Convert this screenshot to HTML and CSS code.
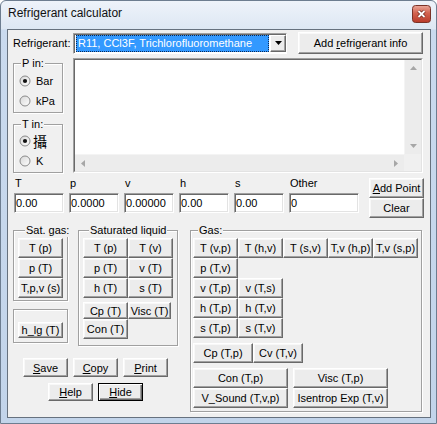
FILE: index.html
```html
<!DOCTYPE html>
<html>
<head>
<meta charset="utf-8">
<title>Refrigerant calculator</title>
<link rel="stylesheet" href="styles.css">
</head>
<body>
<div class="window">
  <div class="titlebar">
    <span class="title">Refrigerant calculator</span>
    <span class="close">
      <svg width="19" height="18" viewBox="0 0 19 18">
        <defs>
          <linearGradient id="cg" x1="0" y1="0" x2="0" y2="1">
            <stop offset="0" stop-color="#eaa89b"/>
            <stop offset="0.45" stop-color="#d3634f"/>
            <stop offset="1" stop-color="#b83a2a"/>
          </linearGradient>
        </defs>
        <rect x="0.5" y="0.5" width="18" height="17" rx="3" fill="url(#cg)" stroke="#7a3328"/>
        <path d="M6.5 6 L12.5 12 M12.5 6 L6.5 12" stroke="#6b2219" stroke-width="3.2"/>
        <path d="M6.5 6 L12.5 12 M12.5 6 L6.5 12" stroke="#fff" stroke-width="1.8"/>
      </svg>
    </span>
  </div>
  <div class="client">
    <div class="row1">
      <span class="reflabel">Refrigerant:</span>
      <div class="combo">
        <span class="combo-sel">R11, CCl3F, Trichlorofluoromethane</span>
        <span class="combo-btn"><svg width="7" height="4" viewBox="0 0 7 4"><path d="M0 0H7L3.5 4Z" fill="#000"/></svg></span>
      </div>
      <button class="btn btn-info">Add <u>r</u>efrigerant info</button>
    </div>

    <div class="row2">
      <div class="units">
        <div class="group pgroup">
          <div class="legend">P in:</div>
          <div class="radios">
            <div class="radio-row">
              <svg class="radio" width="12" height="12" viewBox="0 0 12 12"><defs><linearGradient id="rg" x1="0" y1="0" x2="1" y2="1"><stop offset="0" stop-color="#d6d6d6"/><stop offset="1" stop-color="#ffffff"/></linearGradient></defs><circle cx="6" cy="6" r="5" fill="url(#rg)" stroke="#8a8a8a"/><circle cx="6" cy="6" r="2.1" fill="#111"/></svg>
              <span class="rlabel">Bar</span>
            </div>
            <div class="radio-row">
              <svg class="radio" width="12" height="12" viewBox="0 0 12 12"><circle cx="6" cy="6" r="5" fill="url(#rg)" stroke="#8a8a8a"/></svg>
              <span class="rlabel">kPa</span>
            </div>
          </div>
        </div>
        <div class="group tgroup">
          <div class="legend">T in:</div>
          <div class="radios">
            <div class="radio-row">
              <svg class="radio" width="12" height="12" viewBox="0 0 12 12"><circle cx="6" cy="6" r="5" fill="url(#rg)" stroke="#8a8a8a"/><circle cx="6" cy="6" r="2.1" fill="#111"/></svg>
              <span class="rlabel cjk">攝</span>
            </div>
            <div class="radio-row">
              <svg class="radio" width="12" height="12" viewBox="0 0 12 12"><circle cx="6" cy="6" r="5" fill="url(#rg)" stroke="#8a8a8a"/></svg>
              <span class="rlabel">K</span>
            </div>
          </div>
        </div>
      </div>

      <div class="listbox">
        <div class="lb-inner">
          <div class="lb-area"></div>
          <div class="vscroll">
            <span class="arr"><svg width="7" height="4" viewBox="0 0 7 4"><path d="M3.5 0L7 4H0Z" fill="#a6a6a6"/></svg></span>
            <span class="arr"><svg width="7" height="4" viewBox="0 0 7 4"><path d="M0 0H7L3.5 4Z" fill="#a6a6a6"/></svg></span>
          </div>
          <div class="hscroll">
            <span class="arr"><svg width="4" height="7" viewBox="0 0 4 7"><path d="M0 3.5L4 0V7Z" fill="#a6a6a6"/></svg></span>
            <span class="arr"><svg width="4" height="7" viewBox="0 0 4 7"><path d="M4 3.5L0 0V7Z" fill="#a6a6a6"/></svg></span>
          </div>
          <div class="corner"></div>
        </div>
      </div>
    </div>

    <div class="row3">
      <div class="fields">
        <div class="field"><span class="flabel">T</span><input class="tbox" type="text" value="0.00"></div>
        <div class="field"><span class="flabel">p</span><input class="tbox" type="text" value="0.0000"></div>
        <div class="field"><span class="flabel">v</span><input class="tbox" type="text" value="0.00000"></div>
        <div class="field"><span class="flabel">h</span><input class="tbox" type="text" value="0.00"></div>
        <div class="field"><span class="flabel">s</span><input class="tbox" type="text" value="0.00"></div>
        <div class="field wide"><span class="flabel">Other</span><input class="tbox" type="text" value="0"></div>
      </div>
      <div class="pt-btns">
        <button class="btn"><u>A</u>dd Point</button>
        <button class="btn">Clear</button>
      </div>
    </div>

    <div class="row4">
      <div class="leftblock">
        <div class="topgroups">
          <div class="col1">
            <div class="group satgas">
              <div class="legend">Sat. gas:</div>
              <div class="stack">
                <button class="btn">T (p)</button>
                <button class="btn">p (T)</button>
                <button class="btn">T,p,v (s)</button>
              </div>
            </div>
            <div class="group hlg">
              <button class="btn">h_lg (T)</button>
            </div>
          </div>
          <div class="group satliq">
            <div class="legend">Saturated liquid</div>
            <div class="grid2">
              <button class="btn">T (p)</button>
              <button class="btn">T (v)</button>
              <button class="btn">p (T)</button>
              <button class="btn">v (T)</button>
              <button class="btn">h (T)</button>
              <button class="btn">s (T)</button>
            </div>
            <div class="liq-extra">
              <button class="btn short">Cp (T)</button>
              <button class="btn short visc">Visc (T)</button>
            </div>
            <button class="btn">Con (T)</button>
          </div>
        </div>
        <div class="cmdrow cmdrow1">
          <button class="btn"><u>S</u>ave</button>
          <button class="btn"><u>C</u>opy</button>
          <button class="btn"><u>P</u>rint</button>
        </div>
        <div class="cmdrow cmdrow2">
          <button class="btn"><u>H</u>elp</button>
          <button class="btn default"><u>H</u>ide</button>
        </div>
      </div>

      <div class="group gas">
        <div class="legend">Gas:</div>
        <div class="gasrow first">
          <button class="btn">T (v,p)</button>
          <button class="btn">T (h,v)</button>
          <button class="btn">T (s,v)</button>
          <button class="btn">T,v (h,p)</button>
          <button class="btn">T,v (s,p)</button>
        </div>
        <div class="gasrow">
          <button class="btn">p (T,v)</button>
        </div>
        <div class="gasrow">
          <button class="btn">v (T,p)</button>
          <button class="btn">v (T,s)</button>
        </div>
        <div class="gasrow">
          <button class="btn">h (T,p)</button>
          <button class="btn">h (T,v)</button>
        </div>
        <div class="gasrow">
          <button class="btn">s (T,p)</button>
          <button class="btn">s (T,v)</button>
        </div>
        <div class="gasrow cprow">
          <button class="btn cp">Cp (T,p)</button>
          <button class="btn cv">Cv (T,v)</button>
        </div>
        <div class="gasrow widerow conrow">
          <button class="btn">Con (T,p)</button>
          <button class="btn">Visc (T,p)</button>
        </div>
        <div class="gasrow widerow">
          <button class="btn">V_Sound (T,v,p)</button>
          <button class="btn">Isentrop Exp (T,v)</button>
        </div>
      </div>
    </div>
  </div>
</div>
</body>
</html>
```
FILE: styles.css
```css
* { box-sizing: border-box; }
html, body { margin: 0; padding: 0; }
body {
  width: 437px;
  height: 424px;
  overflow: hidden;
  background: #fff;
  font-family: "Liberation Sans", Arial, sans-serif;
  font-size: 11px;
  color: #000;
}

.window {
  width: 437px;
  height: 424px;
  display: flex;
  flex-direction: column;
  padding: 0 5px 5px 6px;
  border: 1px solid #6d7d90;
  border-radius: 6px 6px 0 0;
  background: linear-gradient(#eef3fa 0, #dde7f3 28px, #cadaee 29px, #c2d4ea 100%);
}

.titlebar {
  flex: none;
  display: flex;
  align-items: flex-start;
  height: 28px;
  padding-top: 4px;
}
.title {
  margin: 1px 0 0 1px;
  font-size: 12px;
  line-height: 14px;
  color: #111;
}
.close { margin-left: auto; width: 19px; height: 18px; display: block; }
.close svg { display: block; }

.client {
  flex: 1;
  background: #f0f0f0;
  border: 1px solid #66717e;
}

/* generic controls */
.btn {
  display: block;
  margin: 0;
  padding: 0;
  width: 45px;
  height: 20px;
  font: inherit;
  color: #000;
  text-align: center;
  white-space: nowrap;
  overflow: hidden;
  background: #ececec;
  border: 1px solid;
  border-color: #fff #696969 #696969 #fff;
  box-shadow: inset -1px -1px 0 #a0a0a0, inset 1px 1px 0 #f8f8f8;
  line-height: 14px;
}
.btn u { text-decoration: underline; text-underline-offset: 1px; }
.btn.default {
  border-color: #000;
  box-shadow: inset 1px 1px 0 #fff, inset -1px -1px 0 #696969, inset -2px -2px 0 #a0a0a0;
}

.group {
  border: 1px solid #a0a0a0;
  box-shadow: inset 1px 1px 0 #fff, 1px 1px 0 #fff;
}
.legend {
  display: table;
  height: 13px;
  line-height: 13px;
  margin: -7px 0 0 7px;
  padding: 0 1px;
  white-space: nowrap;
  background: #f0f0f0;
}

/* row 1 */
.row1 {
  display: flex;
  align-items: center;
  height: 26px;
  padding-left: 5px;
}
.reflabel { width: 60px; flex: none; }
.combo {
  flex: none;
  width: 214px;
  height: 21px;
  margin-right: 11px;
  display: flex;
  background: #fff;
  border: 1px solid;
  border-color: #a0a0a0 #fff #fff #a0a0a0;
  box-shadow: inset 1px 1px 0 #696969;
}
.combo-sel {
  flex: 1;
  margin: 1px 0 1px 2px;
  padding-left: 1px;
  display: flex;
  align-items: center;
  background: #3399ff;
  color: #fff;
  border: 1px dotted #0b2a55;
  white-space: nowrap;
  overflow: hidden;
}
.combo-btn {
  flex: none;
  width: 16px;
  margin: 1px 0 1px 1px;
  display: flex;
  align-items: center;
  justify-content: center;
  background: #ececec;
  border: 1px solid;
  border-color: #fff #696969 #696969 #fff;
  box-shadow: inset -1px -1px 0 #a0a0a0;
}
.combo-btn svg { display: block; }
.btn-info { width: 125px; height: 22px; }

/* row 2 */
.row2 { display: flex; margin-top: 2px; }
.units { flex: none; width: 50px; margin: 5px 0 0 5px; }
.pgroup { height: 50px; }
.tgroup { height: 49px; margin-top: 11px; }
.radios { margin-top: 1px; }
.tgroup .radios { margin-top: 0; }
.radio-row {
  display: flex;
  align-items: center;
  height: 20px;
  padding-left: 5px;
}
.radio { display: block; flex: none; }
.rlabel { margin-left: 5px; }
.rlabel.cjk {
  margin-left: 2px;
  font-family: "Noto Sans CJK TC", "Noto Sans CJK SC", sans-serif;
  font-size: 14px;
  line-height: 16px;
}

.listbox {
  flex: none;
  width: 350px;
  height: 115px;
  margin-left: 10px;
  border: 1px solid;
  border-color: #a0a0a0 #fff #fff #a0a0a0;
}
.lb-inner {
  height: 100%;
  display: grid;
  grid-template-columns: 1fr 17px;
  grid-template-rows: 1fr 17px;
  border: 1px solid;
  border-color: #696969 #e3e3e3 #e3e3e3 #696969;
  background: #fff;
}
.lb-area { background: #fff; }
.vscroll, .hscroll {
  display: flex;
  justify-content: space-between;
  background: #ececec;
}
.vscroll { flex-direction: column; border-left: 1px solid #f4f4f4; }
.hscroll { border-top: 1px solid #f4f4f4; }
.arr {
  width: 16px;
  height: 16px;
  display: flex;
  align-items: center;
  justify-content: center;
}
.arr svg { display: block; }
.corner { background: #f0f0f0; }

/* row 3 */
.row3 { display: flex; margin-top: 4px; }
.fields { display: flex; gap: 5px; margin-left: 6px; }
.field { display: flex; flex-direction: column; width: 50px; }
.field.wide { width: 70px; }
.flabel { height: 13px; line-height: 13px; padding-left: 1px; margin-bottom: 3px; }
.tbox {
  display: block;
  width: 100%;
  height: 20px;
  margin: 0;
  padding: 0 0 0 1px;
  font: inherit;
  color: #000;
  background: #fff;
  border: 1px solid;
  border-color: #a0a0a0 #fff #fff #a0a0a0;
  box-shadow: inset 1px 1px 0 #696969, inset -1px -1px 0 #e3e3e3;
  outline: none;
}
.pt-btns { display: flex; flex-direction: column; margin: 1px 0 0 10px; }
.pt-btns .btn { width: 55px; height: 20px; }

/* row 4 */
.row4 { display: flex; align-items: flex-start; margin-top: 12px; }
.leftblock { flex: none; width: 165px; margin-left: 5px; }
.topgroups { display: flex; align-items: flex-start; }
.col1 { flex: none; width: 55px; }
.satgas { width: 55px; padding: 0 4px 2px; }
.satgas .legend { margin-left: 7px; }
.stack { margin-top: 1px; }
.hlg { margin-top: 8px; padding: 12px 4px 4px; }
.hlg .btn { height: 16px; }

.satliq { flex: none; width: 100px; margin-left: 10px; padding: 0 4px 6px; }
.satliq .legend { margin-left: 6px; }
.grid2 { display: grid; grid-template-columns: 45px 45px; margin-top: 1px; }
.liq-extra { display: flex; margin-top: 4px; }
.btn.short { height: 17px; }
.btn.visc { width: 43px; }

.cmdrow { display: flex; gap: 5px; }
.cmdrow .btn { width: 45px; height: 19px; }
.cmdrow1 { margin: 12px 0 0 10px; }
.cmdrow2 { margin: 6px 0 0 35px; }
.cmdrow2 .btn { height: 18px; }

.gas { flex: none; width: 232px; margin-left: 12px; padding: 0 3px 3px 2px; }
.gas .legend { margin-left: 5px; }
.gasrow { display: flex; }
.gasrow.first { margin-top: 1px; }
.cprow { margin-top: 5px; }
.btn.cp { width: 60px; }
.btn.cv { width: 50px; }
.widerow { gap: 5px; }
.widerow .btn { width: 95px; }
.conrow { margin-top: 5px; }
```
